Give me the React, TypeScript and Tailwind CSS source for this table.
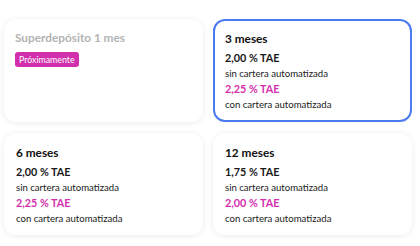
const plans = [
  { title: "3 meses", base: "2,00 % TAE", boosted: "2,25 % TAE", selected: true },
  { title: "6 meses", base: "2,00 % TAE", boosted: "2,25 % TAE", selected: false },
  { title: "12 meses", base: "1,75 % TAE", boosted: "2,00 % TAE", selected: false },
];

export default function App() {
  return (
    <div
      className="w-[420px] h-[246px] bg-white pl-[4px] pr-[8px] pt-[19px]"
      style={{ fontFamily: "Lato, 'Open Sans', sans-serif" }}
    >
      <div className="grid grid-cols-2 gap-x-[10px] gap-y-[11px]">
        {/* Coming soon */}
        <div className="h-[103px] rounded-[12px] bg-white shadow-[0_1px_6px_rgba(0,0,0,0.08)] px-[11px] pt-[11px]">
          <h3 className="text-[11.8px] font-bold text-[#b3b3b3] leading-[15px]">
            Superdepósito 1 mes
          </h3>
          <span className="mt-[5px] inline-block rounded-[3px] bg-[#d12fac] px-[4px] text-[8.8px] leading-[15px] text-white">
            Próximamente
          </span>
        </div>

        {plans.map((p) => (
          <div
            key={p.title}
            className={
              p.selected
                ? "h-[103px] rounded-[12px] bg-white border-2 border-[#4a7bf0] px-[10px] pt-[10px]"
                : "h-[102px] rounded-[12px] bg-white shadow-[0_1px_6px_rgba(0,0,0,0.08)] px-[12px] pt-[12px]"
            }
          >
            <h3 className="text-[11.8px] font-bold text-[#111] leading-[15px]">{p.title}</h3>
            <div className="mt-[4px] text-[9.6px] leading-[15.7px] text-[#1a1a1a]">
              <p className="font-bold text-[10.8px]">{p.base}</p>
              <p>sin cartera automatizada</p>
              <p className="font-bold text-[10.8px] text-[#d42fae]">{p.boosted}</p>
              <p>con cartera automatizada</p>
            </div>
          </div>
        ))}
      </div>
    </div>
  );
}
